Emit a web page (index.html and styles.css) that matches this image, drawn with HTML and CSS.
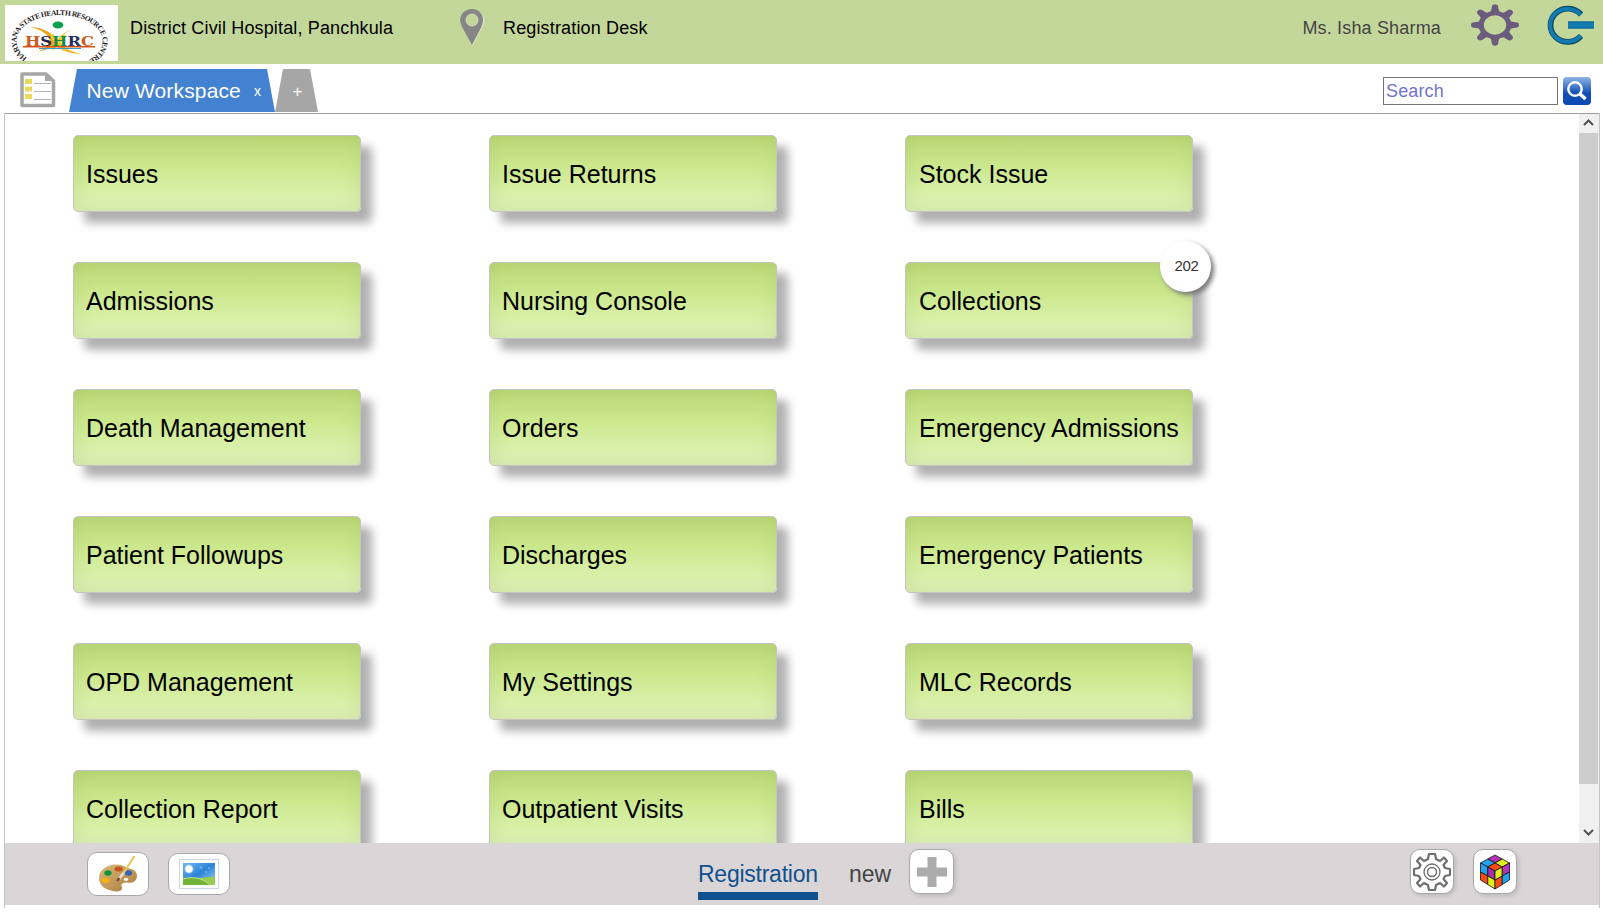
FILE: index.html
```html
<!DOCTYPE html>
<html lang="en">
<head>
<meta charset="utf-8">
<title>Registration Desk</title>
<link rel="stylesheet" href="styles.css">
</head>
<body>
<header class="header">
  <svg class="logo" width="113" height="56" viewBox="0 0 113 56">
    <defs>
      <path id="ring" d="M22 53A43 26 0 1 1 84 55"/>
    </defs>
    <rect width="113" height="56" fill="#fff"/>
    <path d="M26 22C40 23 49 29 51 35C50 42 43 45 33 46.500C43 42 46 39 45 35C43 29 36 25 26 22Z" fill="#f0a41c"/>
    <path d="M80 22C66 23 57 29 55 35C56 42 64 46 76 49C65 49 53 45 51 38C54 29 66 23 80 22Z" fill="#f3b62a"/>
    <path d="M46 30L60 45M60 30L47 44" stroke="#f0d02c" stroke-width="4"/>
    <ellipse cx="53" cy="20" rx="5.400" ry="3.500" fill="#0ba14a"/>
    <path d="M18 41.800H90" stroke="#d3541f" stroke-width="1.500"/>
    <path d="M34 43.500H76" stroke="#3a9ad0" stroke-width="1"/>
    <text class="logo-word" x="20" y="40.500" textLength="69" lengthAdjust="spacingAndGlyphs"><tspan fill="#cf5a22">H</tspan><tspan fill="#26264f">S</tspan><tspan fill="#1a8a48">H</tspan><tspan fill="#26305f">R</tspan><tspan fill="#cf5a22">C</tspan></text>
    <text class="logo-ring"><textPath href="#ring">HARYANA STATE HEALTH RESOURCE CENTRE</textPath></text>
  </svg>
  <span class="hospital">District Civil Hospital, Panchkula</span>
  <svg class="pin" width="26" height="38" viewBox="0 0 26 38">
    <path d="M13 1C6 1 1.500 6 1.500 12C1.500 19 8 25 13 37C18 25 24.500 19 24.500 12C24.500 6 20 1 13 1Z" transform="translate(.8 .8)" fill="#dfe6cd"/>
    <path d="M13 1C6 1 1.200 6 1.200 12C1.200 18 7 25 13 37C19 25 24 18 24 12C24 6 20 1 13 1Z" fill="#868686"/>
    <circle cx="13" cy="12" r="6" fill="#c4d79b" stroke="#dde6c6" stroke-width=".8"/>
  </svg>
  <span class="desk">Registration Desk</span>
  <span class="user">Ms. Isha Sharma</span>
  <svg class="gear" width="48" height="42" viewBox="-24 -21 48 42">
    <g transform="scale(1 .86)" fill="#6b5c7d">
      <path id="tooth" d="M-5 -14Q-3.500 -17 -3.200 -21Q-3 -24 0 -24Q3 -24 3.200 -21Q3.500 -17 5 -14Z"/>
      <use href="#tooth" transform="rotate(45)"/><use href="#tooth" transform="rotate(90)"/><use href="#tooth" transform="rotate(135)"/><use href="#tooth" transform="rotate(180)"/><use href="#tooth" transform="rotate(225)"/><use href="#tooth" transform="rotate(270)"/><use href="#tooth" transform="rotate(315)"/>
      <circle r="13.800" fill="none" stroke="#6b5c7d" stroke-width="5.200"/>
    </g>
  </svg>
  <svg class="logout" width="48" height="40" viewBox="0 0 48 40">
    <path d="M34 9.500A17.300 16.600 0 1 0 34 31" fill="none" stroke="#0e4a68" stroke-width="5.800"/>
    <path d="M34.500 10A17.300 16.400 0 1 0 34.500 30.500" transform="translate(-.6 0)" fill="none" stroke="#127bb0" stroke-width="3.800"/>
    <path d="M21 16.500H47V23.500H21Z" fill="#127bb0"/><path d="M21 17H47M21 23H47" stroke="#0d6594"/>
  </svg>
</header>

<nav class="tabs">
  <svg class="list" width="36" height="36" viewBox="0 0 36 36">
    <path d="M2 2H26L33.500 9V33.500H2Z" fill="#fff" stroke="#a6a6a6" stroke-width="3.500" stroke-linejoin="round"/>
    <path d="M25 1V9H34Z" fill="#a6a6a6"/>
    <path d="M5 7h7v5H5zM5 14.500h7v5H5zM5 22h7v5H5z" fill="#e9da5b"/>
    <path d="M14 11.500H31M14 19.500H31M14 27.500H31" stroke="#b4b4b4"/>
  </svg>
  <div class="tab"><span>New Workspace</span><small>x</small></div>
  <div class="tab-add">+</div>
  <input class="search" type="text" placeholder="Search">
  <svg class="find" width="28" height="28" viewBox="0 0 28 28">
    <defs><linearGradient id="blue" x2="0" y2="1"><stop stop-color="#8fb4e6"/><stop offset=".45" stop-color="#2f68c0"/><stop offset=".55" stop-color="#1650b5"/><stop offset="1" stop-color="#0c49b5"/></linearGradient></defs>
    <rect width="28" height="28" rx="4" fill="url(#blue)"/>
    <circle cx="12" cy="12" r="6.700" fill="none" stroke="#fff" stroke-width="2.400"/>
    <path d="M17 17L22.500 22" stroke="#fff" stroke-width="3.600"/>
  </svg>
</nav>

<div class="frame">
<main class="workspace">
  <div class="grid">
    <div class="card">Issues</div><div class="card">Issue Returns</div><div class="card">Stock Issue</div>
    <div class="card">Admissions</div><div class="card">Nursing Console</div><div class="card">Collections<span class="badge">202</span></div>
    <div class="card">Death Management</div><div class="card">Orders</div><div class="card">Emergency Admissions</div>
    <div class="card">Patient Followups</div><div class="card">Discharges</div><div class="card">Emergency Patients</div>
    <div class="card">OPD Management</div><div class="card">My Settings</div><div class="card">MLC Records</div>
    <div class="card">Collection Report</div><div class="card">Outpatient Visits</div><div class="card">Bills</div>
  </div>
  <div class="scroll">
    <svg width="19" height="19" viewBox="0 0 19 19"><path d="M5 11L9.500 6.500L14 11" fill="none" stroke="#505050" stroke-width="2"/></svg>
    <div class="thumb"></div>
    <svg width="19" height="21" viewBox="0 0 19 21"><path d="M5 8L9.500 12.500L14 8" fill="none" stroke="#505050" stroke-width="2"/></svg>
  </div>
</main>

<footer class="dock">
  <div class="btn palette">
    <svg width="40" height="38" viewBox="0 0 40 38">
      <defs><linearGradient id="wood" x2="1" y2="1"><stop stop-color="#dcb877"/><stop offset="1" stop-color="#a97c3e"/></linearGradient></defs>
      <path d="M1 23C1 15 9 9.500 18 9.500C26 9.500 28 13 33 14C37 15 39 18 39 21C39 27 33 28.500 29 27.500C25 27.500 22 29 24 32C25 35 22 36.500 18 36.500C8 35.500 1 31 1 23Z" fill="url(#wood)"/>
      <ellipse cx="10" cy="18" rx="3.700" ry="2.700" fill="#159440"/><ellipse cx="20.500" cy="14" rx="4" ry="2.500" fill="#c8521f"/><ellipse cx="30.500" cy="18" rx="3.700" ry="2.700" fill="#2d63b8"/><ellipse cx="7.500" cy="25.500" rx="4" ry="2.500" fill="#f5b210"/><ellipse cx="28" cy="24.500" rx="2.200" ry="1.400" fill="#fff"/>
      <path d="M36.500 1L25 19" stroke="#ecc75e" stroke-width="2.200"/><path d="M25.500 18L21 24" stroke="#e6e2d8" stroke-width="2.600"/><path d="M21.500 23L19 26" stroke="#705030" stroke-width="2"/>
    </svg>
  </div>
  <div class="btn photo">
    <svg width="40" height="30" viewBox="0 0 40 30">
      <defs><linearGradient id="sky" x2="1" y2="1"><stop stop-color="#6db8f2"/><stop offset=".5" stop-color="#2d83d6"/><stop offset="1" stop-color="#a9d8f8"/></linearGradient><radialGradient id="sun"><stop offset=".6" stop-color="#fff"/><stop offset="1" stop-color="#fff" stop-opacity="0"/></radialGradient></defs>
      <rect x=".5" y=".5" width="39" height="29" fill="#fff" stroke="#c9d8e4"/>
      <path d="M4 4H36V26H4Z" fill="url(#sky)"/><circle cx="10" cy="10" r="5" fill="url(#sun)"/>
      <circle cx="22" cy="8.500" r="1.300" fill="#67aee9"/><circle cx="30" cy="9" r="1" fill="#67aee9"/><circle cx="27" cy="13" r="1.100" fill="#67aee9"/>
      <path d="M18 20C25 18 30 18 36 18V26H18Z" fill="#9acb52"/><path d="M4 20C14 17 24 19 31 26H4Z" fill="#73b338"/><path d="M4 20C14 17 24 19 31 26" fill="none" stroke="#c5e67d"/>
    </svg>
  </div>
  <span class="page active">Registration</span>
  <span class="page">new</span>
  <div class="btn plus"><svg width="30" height="30" viewBox="0 0 30 30"><path d="M10.500 0h9v10.500H30v9H19.500V30h-9V19.500H0v-9h10.500z" fill="#ababab"/></svg></div>
  <div class="btn settings">
    <svg width="38" height="38" viewBox="-19 -19 38 38" fill="none" stroke="#6e6e6e">
      <path stroke-width="2.200" stroke-linejoin="round" d="M-3-18H3L4-13L8-11L12-14.500L15-11L11.500-7L13-4L18-3V3L13 4L11.500 7L15 11L12 14.500L8 11L4 13L3 18H-3L-4 13L-8 11L-12 14.500L-15 11L-11.500 7L-13 4L-18 3V-3L-13-4L-11.500-7L-15-11L-12-14.500L-8-11L-4-13Z"/>
      <circle r="8" stroke-width="1.300"/><circle r="4.500" stroke-width="1.500"/>
    </svg>
  </div>
  <div class="btn cube">
    <svg width="32" height="36" viewBox="-16 -18 32 36" stroke="#111" stroke-width=".8" stroke-linejoin="round">
      <path fill="#b233b5" d="M0-17L7.250-13L0-9L-7.250-13Z"/><path fill="#22a2ee" d="M-7.250-13L0-9L-7.250-5L-14.500-9Z"/><path fill="#dcf01c" d="M7.250-13L14.500-9L7.250-5L0-9Z"/><path fill="#fb4b13" d="M0-9L7.250-5L0-1L-7.250-5Z"/>
      <path fill="#22a2ee" d="M-14.500-9L-7.250-5V4L-14.500 0Z"/><path fill="#a431a8" d="M-7.250-5L0-1V8L-7.250 4Z"/><path fill="#fb4b13" d="M-14.500 0L-7.250 4V12.500L-14.500 8Z"/><path fill="#dcf01c" d="M-7.250 4L0 8V17L-7.250 12.500Z"/>
      <path fill="#dcf01c" d="M0-1L7.250-5V4L0 8Z"/><path fill="#b233b5" d="M7.250-5L14.500-9V0L7.250 4Z"/><path fill="#fb4b13" d="M0 8L7.250 4V12.500L0 17Z"/><path fill="#22a2ee" d="M7.250 4L14.500 0V8L7.250 12.500Z"/>
    </svg>
  </div>
</footer>
</div>
</body>
</html>
```
FILE: styles.css
```css
* { box-sizing: border-box; }
body {
  margin: 0;
  height: 920px;
  overflow: hidden;
  background: #fff;
  font-family: "Liberation Sans", Arial, sans-serif;
  color: #000;
}
svg { display: block; flex: none; }

.header {
  display: flex;
  align-items: flex-start;
  height: 64px;
  padding: 5px 0 0 5px;
  background: #c4d79b;
  font-size: 18px;
  line-height: 20px;
  letter-spacing: .15px;
  white-space: nowrap;
}
.logo-word { font: bold 13.5px "DejaVu Serif", serif; letter-spacing: 0; }
.logo-ring { font: bold 7.5px "Liberation Serif", serif; letter-spacing: -.5px; fill: #222; }
.hospital { width: 329px; margin: 13px 0 0 12px; }
.pin { margin-top: 3px; }
.desk { margin: 13px 0 0 18px; }
.user { margin: 13px 30px 0 auto; color: #444; letter-spacing: .17px; }
.gear { margin-top: -1px; }
.logout { margin: 0 8px 0 28px; }

.tabs { display: flex; height: 49px; padding: 5px 12px 0 20px; }
.list { margin-top: 3px; }
.tab {
  display: flex;
  align-items: center;
  width: 206px;
  height: 43px;
  margin-left: 13px;
  padding-left: 17.5px;
  color: #fff;
  background: #4382d0;
  clip-path: polygon(8px 0, 198px 0, 100% 100%, 0 100%);
  font-size: 21px;
  letter-spacing: .15px;
  white-space: nowrap;
}
.tab small { margin: 1px 0 0 13px; font-size: 14px; }
.tab-add {
  width: 43px;
  height: 43px;
  padding-left: 2px;
  color: #fff;
  background: #a6a6a6;
  clip-path: polygon(8px 0, 35px 0, 100% 100%, 0 100%);
  font-size: 17px;
  line-height: 45px;
  text-align: center;
}
.search {
  width: 175px;
  height: 28px;
  margin: 8px 5px 0 auto;
  padding: 0 2px;
  border: 1px solid #767676;
  border-radius: 0;
  font: 18px "Liberation Sans", Arial, sans-serif;
  letter-spacing: .15px;
}
.search::placeholder { color: #7373cf; }
.find { margin-top: 8px; }

.frame {
  width: 1596px;
  height: 795px;
  margin-left: 4px;
  border: solid #c4c4c4;
  border-width: 0 1px;
}
.workspace {
  display: flex;
  justify-content: space-between;
  height: 730px;
  overflow: hidden;
  border-top: 1px solid #a0a0a0;
}
.grid {
  display: grid;
  grid-template-columns: repeat(3, 288px);
  grid-auto-rows: 77px;
  gap: 50px 128px;
  padding: 21px 0 0 68px;
}
.card {
  position: relative;
  padding-left: 12px;
  border: 1px solid #c4c4c4;
  border-radius: 5px;
  background: linear-gradient(#bada76, #cbe88d 40%, #d9f0a8 75%, #dff2ba);
  box-shadow: 11px 11px 10px #b0b0b0, inset 0 0 20px rgba(160, 180, 100, .28);
  font-size: 25px;
  line-height: 76px;
  white-space: nowrap;
}
.card:nth-child(3n) { padding-left: 13px; }
.badge {
  position: absolute;
  top: -22px;
  right: -19px;
  width: 51px;
  height: 51px;
  padding-left: 2px;
  border-radius: 50%;
  background: #fff;
  box-shadow: 3px 3px 5px #777;
  color: #333;
  font-size: 15px;
  line-height: 49px;
  letter-spacing: -.3px;
  text-align: center;
}
.scroll { display: flex; flex-direction: column; width: 20px; background: #f0f0f0; }
.thumb { width: 19px; height: 651px; background: #cdcdcd; }
.scroll svg:last-child { margin-top: auto; }

.dock {
  display: flex;
  align-items: flex-start;
  height: 62px;
  padding-left: 82px;
  background: #dad6d7;
}
.btn {
  display: flex;
  align-items: center;
  justify-content: center;
  flex: none;
  width: 62px;
  height: 44px;
  margin-top: 9px;
  border: 1px solid #a8a8a8;
  border-radius: 10px;
  background: #fff;
}
.photo { height: 42px; margin: 10px 0 0 19px; }
.page {
  margin: 18px 0 0 31px;
  color: #444;
  font-size: 23px;
  line-height: 26px;
}
.active {
  width: 120px;
  height: 39px;
  margin-left: 468px;
  border-bottom: 8px solid #11508e;
  color: #11508e;
  letter-spacing: -.25px;
  white-space: nowrap;
}
.plus, .settings, .cube {
  width: 45px;
  height: 45px;
  margin-top: 6px;
  box-shadow: 2px 2px 4px rgba(0, 0, 0, .12);
}
.plus { margin-left: 18px; }
.settings { width: 44px; margin-left: auto; }
.cube { width: 44px; margin: 6px 82px 0 19px; }
```
